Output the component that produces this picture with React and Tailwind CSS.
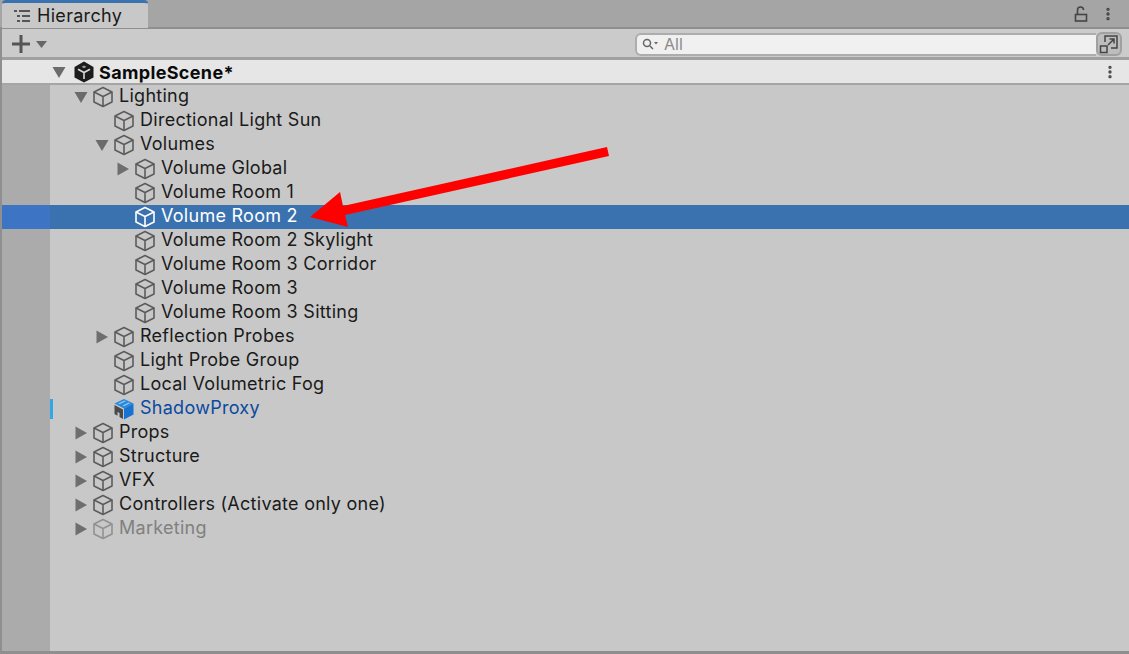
import { MoreVertical } from "lucide-react";

const rows = [
  { name: "Lighting", depth: 0, arrow: "down" },
  { name: "Directional Light Sun", depth: 1 },
  { name: "Volumes", depth: 1, arrow: "down" },
  { name: "Volume Global", depth: 2, arrow: "right" },
  { name: "Volume Room 1", depth: 2 },
  { name: "Volume Room 2", depth: 2, selected: true },
  { name: "Volume Room 2 Skylight", depth: 2 },
  { name: "Volume Room 3 Corridor", depth: 2 },
  { name: "Volume Room 3", depth: 2 },
  { name: "Volume Room 3 Sitting", depth: 2 },
  { name: "Reflection Probes", depth: 1, arrow: "right" },
  { name: "Light Probe Group", depth: 1 },
  { name: "Local Volumetric Fog", depth: 1 },
  { name: "ShadowProxy", depth: 1, prefab: true },
  { name: "Props", depth: 0, arrow: "right" },
  { name: "Structure", depth: 0, arrow: "right" },
  { name: "VFX", depth: 0, arrow: "right" },
  { name: "Controllers (Activate only one)", depth: 0, arrow: "right" },
  { name: "Marketing", depth: 0, arrow: "right", disabled: true },
];

function Cube({ color = "#5c5c5c" }) {
  return (
    <svg width="22" height="22" viewBox="0 0 22 22" fill="none" stroke={color} strokeWidth="1.6" strokeLinejoin="round" className="shrink-0">
      <path d="M11 1.5 L20 6 V16 L11 20.5 L2 16 V6 Z" />
      <path d="M2 6 L11 10.5 L20 6 M11 10.5 V20.5" />
    </svg>
  );
}

function PrefabCube() {
  return (
    <svg width="22" height="22" viewBox="0 0 22 22" className="shrink-0">
      <path d="M11 1 L20.5 5.5 L11 10.5 L1.5 5.5 Z" fill="#2a86dc" />
      <path d="M5 5.5 L11.5 2.5 L13 3.2 L6.5 6.3 Z M9.5 7.5 L15.5 4.5 L17 5.2 L11 8.2 Z" fill="#8cc8f5" />
      <path d="M11 10.5 L20.5 5.5 V16.5 L11 21.5 Z" fill="#1673d1" />
      <path d="M1.5 7 L10 11.5 V21 L6.5 19 V15 L4.5 14 V17.8 L1.5 16 Z" fill="#4a4a4a" />
    </svg>
  );
}

function UnityLogo() {
  return (
    <svg width="22" height="22" viewBox="0 0 22 22" className="shrink-0">
      <path d="M11 0.5 L20.5 6 V16.5 L11 21.5 L1.5 16.5 V6 Z" fill="#1c1c1c" />
      <path d="M5 8.2 L11 11.5 L17 8.2 M11 11.5 V18" fill="none" stroke="#d8d8d8" strokeWidth="1.6" />
      <path d="M8.5 5.8 L11 4.4 L13.5 5.8 L11 7.2 Z" fill="#9a9a9a" />
    </svg>
  );
}

function Triangle({ dir }) {
  if (dir === "down") {
    return (
      <svg width="14" height="12" viewBox="0 0 14 12" className="shrink-0">
        <path d="M0.5 1 H13.5 L7 12 Z" fill="#6b6b6b" />
      </svg>
    );
  }
  return (
    <svg width="12" height="14" viewBox="0 0 12 14" className="shrink-0">
      <path d="M0.5 0.5 V13.5 L12 7 Z" fill="#6e6e6e" />
    </svg>
  );
}

function Row({ row }) {
  const left = row.depth * 21;
  let text = "text-[#1a1a1a]";
  if (row.selected) text = "text-white";
  if (row.prefab) text = "text-[#0b4aa0]";
  if (row.disabled) text = "text-[#808080]";

  return (
    <div className={`relative flex h-6 items-center ${row.selected ? "bg-[#3a72b0]" : ""}`}>
      <div className={`h-full w-[50px] shrink-0 ${row.selected ? "bg-[#3e74c4]" : "bg-[#ababab]"}`} />
      {row.prefab && <div className="absolute left-[50px] top-0.5 h-5 w-[3px] bg-[#2ea8e8]" />}
      <div className="flex items-center" style={{ paddingLeft: left }}>
        <div className="flex w-[65px] shrink-0 items-center justify-end gap-1 pr-px">
          {row.arrow && <div className="flex w-[15px] justify-center"><Triangle dir={row.arrow} /></div>}
          <div className={row.disabled ? "opacity-50" : ""}>
            {row.prefab ? <PrefabCube /> : <Cube color={row.selected ? "#ffffff" : "#5c5c5c"} />}
          </div>
        </div>
        <span className={`ml-1 whitespace-nowrap pb-0.5 text-[18px] leading-6 tracking-[0.27px] ${text}`}>{row.name}</span>
      </div>
    </div>
  );
}

export default function App() {
  return (
    <div className="relative flex h-[654px] w-[1129px] flex-col overflow-hidden bg-[#c8c8c8] font-['Inter',sans-serif]">
      {/* tab strip */}
      <div className="flex h-[29px] shrink-0 border-b-2 border-[#8f8f8f] bg-[#a5a5a5] pl-0.5">
        <div className="flex h-[28px] w-[146px] items-center gap-[7px] rounded-t-sm border-t-[3px] border-[#3a72b0] bg-[#c8c8c8] pl-3">
          <svg width="16" height="12" viewBox="0 0 16 12" fill="#555555">
            <rect x="0" y="0" width="3" height="2" />
            <rect x="5" y="0" width="11" height="2" />
            <rect x="3" y="5" width="3" height="2" />
            <rect x="8" y="5" width="8" height="2" />
            <rect x="3" y="10" width="3" height="2" />
            <rect x="8" y="10" width="8" height="2" />
          </svg>
          <span className="text-[18px] tracking-[0.3px] text-[#1a1a1a]">Hierarchy</span>
        </div>
        <div className="ml-auto flex items-center gap-[12px] pr-[13px]">
          <svg width="14" height="16" viewBox="0 0 14 16" fill="none" stroke="#444444" strokeWidth="1.6">
            <rect x="1.5" y="8.5" width="11" height="6.5" />
            <path d="M3.5 8 V4 Q3.5 1 6.5 1 Q9.5 1 9.5 4" />
          </svg>
          <MoreVertical size={16} color="#444444" strokeWidth={3} />
        </div>
      </div>

      {/* toolbar */}
      <div className="flex h-[31px] shrink-0 items-center border-b-[3px] border-[#a0a0a0] bg-[#cbcbcb] pl-3 pr-[7px] pt-0.5">
        <svg width="18" height="18" viewBox="0 0 18 18" fill="#555555">
          <rect x="7.5" y="0" width="3" height="18" />
          <rect x="0" y="7.5" width="18" height="3" />
        </svg>
        <svg width="11" height="7" viewBox="0 0 11 7" fill="#666666" className="ml-1.5">
          <path d="M0 0 H11 L5.5 7 Z" />
        </svg>
        <div className="ml-auto flex h-[23px] w-[461px] items-center rounded-l-md border-2 border-r-0 border-[#adadad] bg-[#f0f0f0] pl-[5px]">
          <svg width="16" height="12" viewBox="0 0 16 12" fill="none" stroke="#666666" strokeWidth="1.5">
            <circle cx="5" cy="5" r="3.5" />
            <path d="M8 8 L11 11" />
            <path d="M12 4 H16 L14 6.5 Z" fill="#666666" stroke="none" />
          </svg>
          <span className="ml-1.5 text-[16px] leading-none text-[#8a8a8a]">All</span>
        </div>
        <div className="flex h-[24px] w-[26px] items-center justify-center rounded-md border-2 border-[#a0a0a0] bg-[#bdbdbd]">
          <svg width="20" height="20" viewBox="0 0 20 20" fill="none" stroke="#444444" strokeWidth="1.5">
            <path d="M6 8 V2 H18 V14 H12" />
            <path d="M9 11 L15 5 M10.5 5 H15 V9.5" />
            <rect x="1.5" y="12" width="6.5" height="6.5" />
          </svg>
        </div>
      </div>

      {/* scene header */}
      <div className="flex h-[25px] shrink-0 items-center border-b-2 border-[#a5a5a5] bg-[#e6e6e6] pl-[52px] pr-[11px] pt-px">
        <Triangle dir="down" />
        <div className="ml-[7px]"><UnityLogo /></div>
        <span className="ml-1 text-[18px] font-bold tracking-[0.35px] text-[#0a0a0a]">SampleScene*</span>
        <MoreVertical size={16} color="#444444" strokeWidth={3} className="ml-auto" />
      </div>

      {/* tree */}
      <div className="flex min-h-0 flex-1 flex-col">
        {rows.map((row) => <Row key={row.name} row={row} />)}
        <div className="flex min-h-0 flex-1">
          <div className="w-[50px] bg-[#ababab]" />
        </div>
      </div>
      <div className="h-[3px] shrink-0 bg-[#8f8f8f]" />

      {/* window edge */}
      <div className="absolute bottom-0 left-0 top-[29px] w-0.5 bg-[#8f8f8f]" />

      {/* annotation arrow */}
      <svg width="1129" height="654" viewBox="0 0 1129 654" className="pointer-events-none absolute left-0 top-0">
        <path d="M607 147 L343 206 L340 192 L310 217 L348 227 L345 215 L609 156 Z" fill="#ff0000" />
      </svg>
    </div>
  );
}
